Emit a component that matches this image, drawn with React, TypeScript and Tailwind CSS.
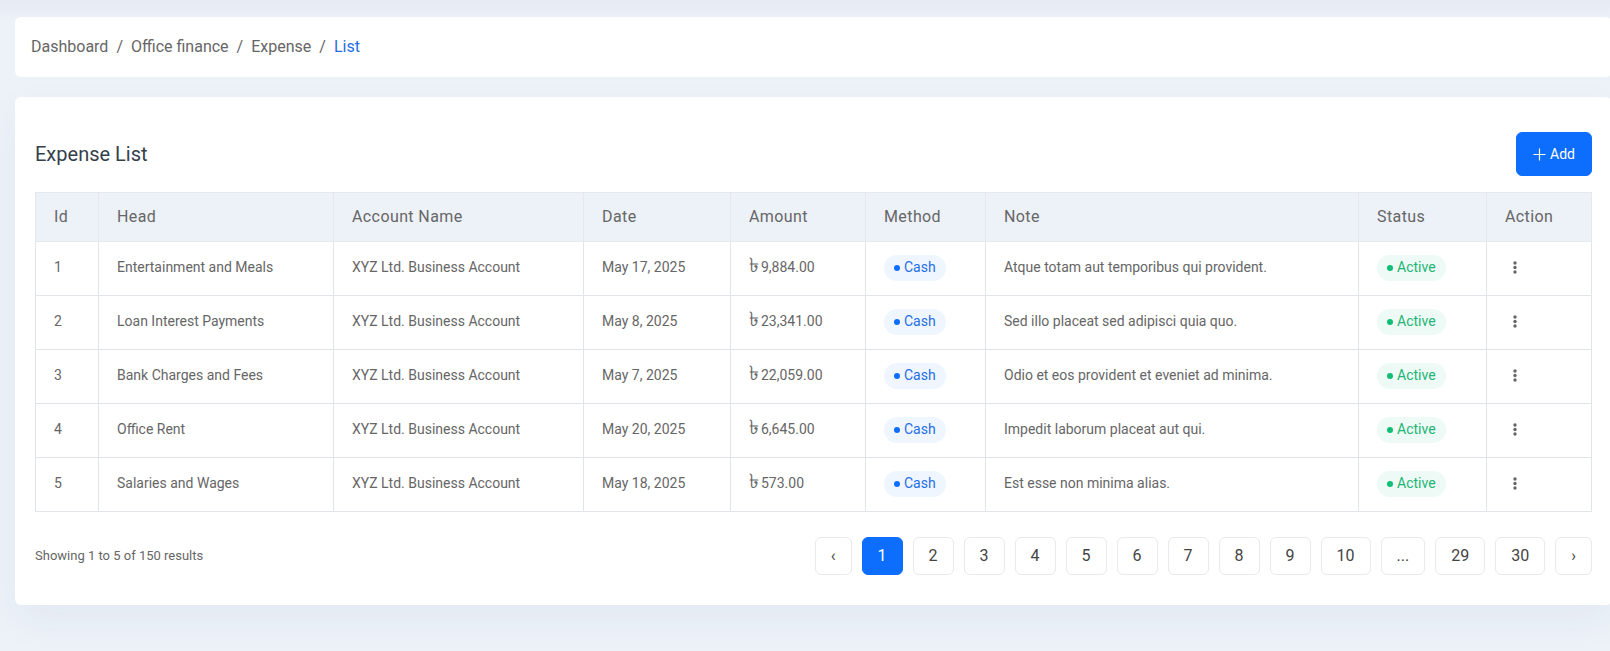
type Expense = {
  id: number;
  head: string;
  account: string;
  date: string;
  amount: string;
  note: string;
};

const expenses: Expense[] = [
  { id: 1, head: "Entertainment and Meals", account: "XYZ Ltd. Business Account", date: "May 17, 2025", amount: "9,884.00", note: "Atque totam aut temporibus qui provident." },
  { id: 2, head: "Loan Interest Payments", account: "XYZ Ltd. Business Account", date: "May 8, 2025", amount: "23,341.00", note: "Sed illo placeat sed adipisci quia quo." },
  { id: 3, head: "Bank Charges and Fees", account: "XYZ Ltd. Business Account", date: "May 7, 2025", amount: "22,059.00", note: "Odio et eos provident et eveniet ad minima." },
  { id: 4, head: "Office Rent", account: "XYZ Ltd. Business Account", date: "May 20, 2025", amount: "6,645.00", note: "Impedit laborum placeat aut qui." },
  { id: 5, head: "Salaries and Wages", account: "XYZ Ltd. Business Account", date: "May 18, 2025", amount: "573.00", note: "Est esse non minima alias." },
];

const columns = [
  { title: "Id", width: "w-[63px]" },
  { title: "Head", width: "w-[235px]" },
  { title: "Account Name", width: "w-[250px]" },
  { title: "Date", width: "w-[147px]" },
  { title: "Amount", width: "w-[135px]" },
  { title: "Method", width: "w-[120px]" },
  { title: "Note", width: "" },
  { title: "Status", width: "w-32" },
  { title: "Action", width: "w-[105px]" },
];

const pages = ["‹", "1", "2", "3", "4", "5", "6", "7", "8", "9", "10", "...", "29", "30", "›"];

const crumbs = ["Dashboard", "Office finance", "Expense"];

function Pill({ tone, children }: { tone: "blue" | "green"; children: string }) {
  const colors = tone === "blue" ? "bg-[#f0f6ff] text-[#1f6fe5]" : "bg-[#eefaf6] text-[#22b573]";
  const dot = tone === "blue" ? "bg-[#0d6efd]" : "bg-[#0fbf75]";
  return (
    <span className={`inline-flex h-[26px] items-center gap-1 rounded-full px-2.5 align-middle ${colors}`}>
      <span className={`size-1.5 rounded-full ${dot}`} />
      <span className="pb-0.5">{children}</span>
    </span>
  );
}

function Cell({ children, pill = false }: { children: React.ReactNode; pill?: boolean }) {
  return (
    <td className={`h-[54px] border border-[#e1e4e9] px-[18px] ${pill ? "pb-px" : "pb-[3px]"}`}>{children}</td>
  );
}

function Breadcrumb() {
  return (
    <nav aria-label="Breadcrumb" className="rounded-md bg-white px-4 py-[18px]">
      <ol className="flex gap-2 text-base">
        {crumbs.map((crumb) => (
          <li key={crumb} className="flex gap-2">
            <a href="#">{crumb}</a>
            <span>/</span>
          </li>
        ))}
        <li className="text-[#1f6fe0]" aria-current="page">List</li>
      </ol>
    </nav>
  );
}

function PageButton({ label }: { label: string }) {
  const active = label === "1";
  const names: Record<string, string> = { "‹": "Previous", "›": "Next" };
  return (
    <button
      type="button"
      aria-label={names[label]}
      className={`h-[38px] rounded-md border px-[15px] text-base ${active ? "border-[#0d6efd] bg-[#0d6efd] text-white" : "border-[#e9e9e9] bg-white text-[#444]"}`}
    >
      {label}
    </button>
  );
}

export default function App() {
  return (
    <div className="min-h-screen overflow-hidden bg-[#edf2f9] bg-linear-to-b from-[#e5eaf3] to-[#edf2f9] to-[20px] pt-[17px] pb-11 pl-[15px] font-['Roboto','Noto_Sans',sans-serif] text-[#666]">
      <div className="-mr-0.5 flex flex-col gap-5">
        <Breadcrumb />
        <main className="rounded-md bg-white px-5 pt-[35px] pb-[30px] shadow-[0_15px_40px_0_rgba(40,50,80,0.05)]">
          <div className="flex items-center justify-between pb-4">
            <h1 className="text-xl text-[#343f4a]">Expense List</h1>
            <button type="button" className="flex h-11 items-center gap-[3px] rounded-md border border-[#0d6efd] bg-[#0d6efd] px-4 pb-px text-sm text-white">
              <svg viewBox="0 0 14 14" className="size-3.5" stroke="currentColor" fill="none" aria-hidden="true">
                <path d="M6.500 1.500v12M.5 7.500h12" strokeWidth="1.200" />
              </svg>
              Add
            </button>
          </div>
          <table className="w-full table-fixed border-collapse text-left text-sm">
            <thead>
              <tr className="bg-[#edf2f9]">
                {columns.map((column) => (
                  <th key={column.title} className={`h-[49px] border border-[#e6e8eb] px-[18px] text-base font-normal tracking-wide ${column.width}`}>
                    {column.title}
                  </th>
                ))}
              </tr>
            </thead>
            <tbody>
              {expenses.map((row) => (
                <tr key={row.id}>
                  <Cell>{row.id}</Cell>
                  <Cell>{row.head}</Cell>
                  <Cell>{row.account}</Cell>
                  <Cell>{row.date}</Cell>
                  <Cell>
                    <span className="flex items-baseline gap-0.5">
                      <span className="text-xl leading-4">৳</span>
                      {row.amount}
                    </span>
                  </Cell>
                  <Cell pill><Pill tone="blue">Cash</Pill></Cell>
                  <Cell>{row.note}</Cell>
                  <Cell pill><Pill tone="green">Active</Pill></Cell>
                  <Cell>
                    <button type="button" aria-label={`Actions for expense ${row.id}`} className="flex w-5 justify-center">
                      <svg viewBox="0 0 4 13" className="h-[13px] w-1" fill="currentColor" aria-hidden="true">
                        <circle cx="2" cy="2" r="1.700" />
                        <circle cx="2" cy="6.500" r="1.700" />
                        <circle cx="2" cy="11" r="1.700" />
                      </svg>
                    </button>
                  </Cell>
                </tr>
              ))}
            </tbody>
          </table>
          <div className="flex items-center justify-between pt-[25px]">
            <p className="text-[13px]">Showing 1 to 5 of 150 results</p>
            <nav aria-label="Pagination" className="flex gap-2.5">
              {pages.map((label) => (
                <PageButton key={label} label={label} />
              ))}
            </nav>
          </div>
        </main>
      </div>
    </div>
  );
}
